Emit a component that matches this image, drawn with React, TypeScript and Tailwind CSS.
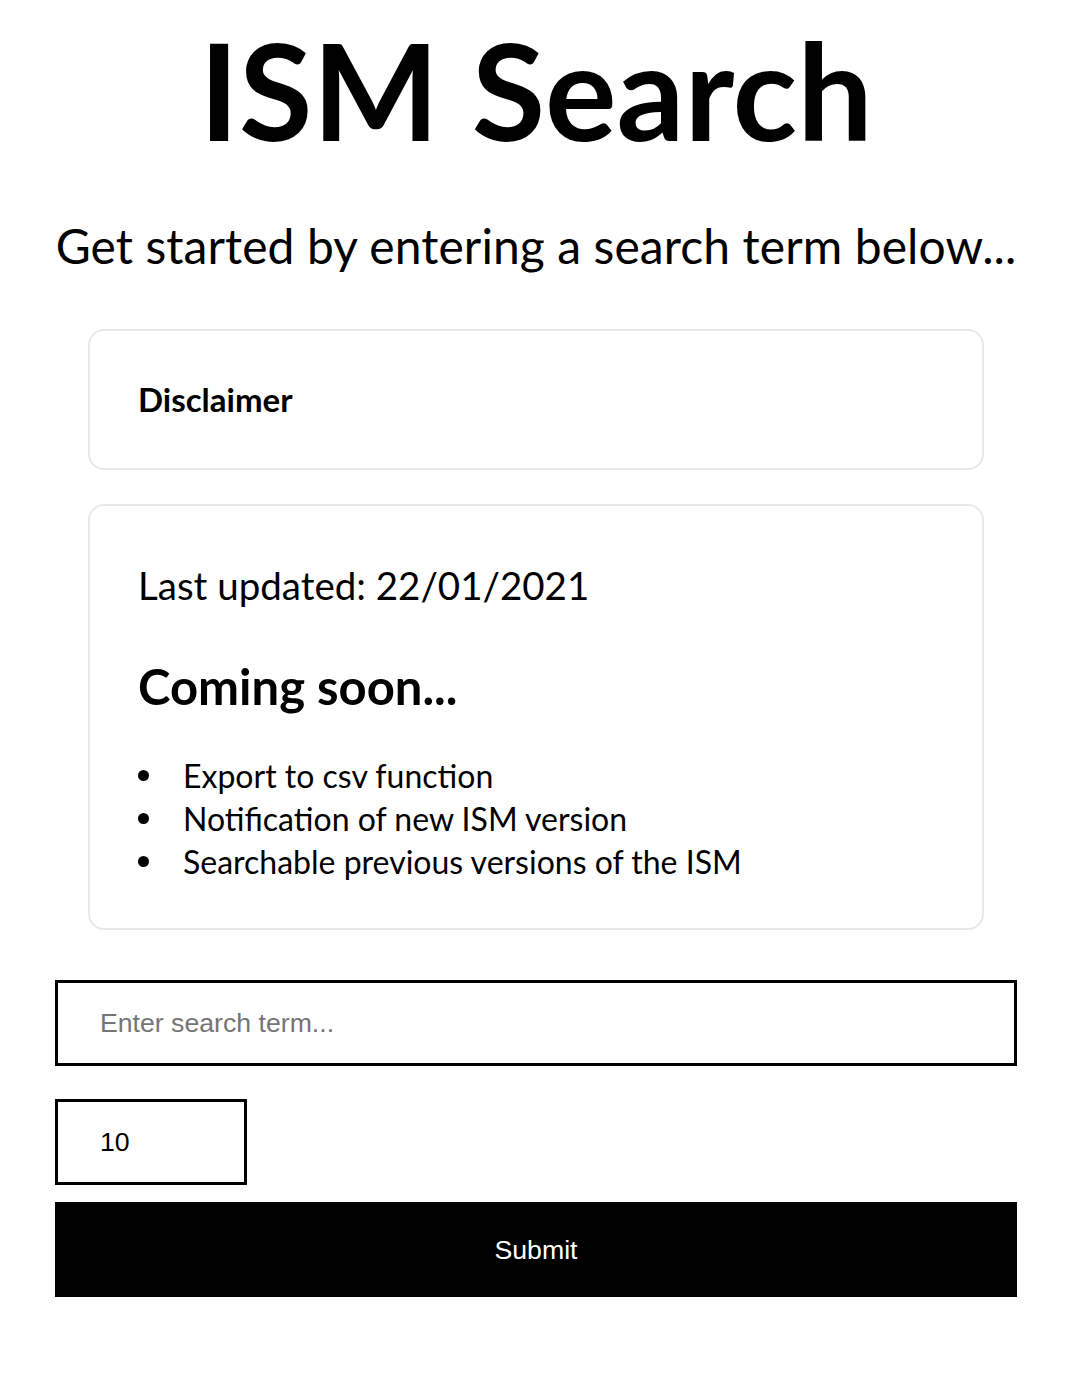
import React from 'react';

const features = [
  'Export to csv function',
  'Notification of new ISM version',
  'Searchable previous versions of the ISM',
];

export default function App() {
  return (
    <div className="min-h-screen bg-white text-black font-['Lato','Noto_Sans',sans-serif]">
      <div className="ml-[55px] w-[962px] pt-[20px]">
        <h1 className="text-center text-[134px] leading-[140px] font-bold">ISM Search</h1>
        <p className="mt-[56px] text-center text-[48px] leading-[60px] tracking-[0.08px] whitespace-nowrap">
          Get started by entering a search term below...
        </p>

        <div className="mx-[33px] mt-[53px] flex flex-col gap-[34px]">
          {/* Disclaimer */}
          <div className="rounded-2xl border-2 border-[#e8e8e8] px-[48px] h-[141px] flex items-center">
            <h3 className="text-[33px] font-bold">Disclaimer</h3>
          </div>

          {/* Updates */}
          <div className="rounded-2xl border-2 border-[#e8e8e8] px-[48px] pt-[55px] pb-[45px]">
            <p className="text-[38.5px] leading-[48px]">Last updated: 22/01/2021</p>
            <h2 className="mt-[49px] text-[49px] leading-[56px] font-bold">Coming soon...</h2>
            <ul className="mt-[40px] text-[32px] leading-[43px]">
              {features.map((f) => (
                <li key={f} className="flex items-center">
                  <span className="w-[45px] shrink-0">
                    <span className="block h-[11px] w-[11px] rounded-full bg-black" />
                  </span>
                  {f}
                </li>
              ))}
            </ul>
          </div>
        </div>

        <form className="mt-[50px] flex flex-col font-['Liberation_Sans',Arial,sans-serif]">
          <input
            type="text"
            placeholder="Enter search term..."
            className="h-[86px] w-full border-[3px] border-black px-[42px] text-[26.67px] placeholder:text-[#757575] outline-none"
          />
          <input
            type="number"
            defaultValue={10}
            className="mt-[33px] h-[86px] w-[192px] border-[3px] border-black px-[42px] text-[26.67px] outline-none"
          />
          <button
            type="button"
            className="mt-[17px] h-[95px] w-full bg-black text-white text-[26.67px]"
          >
            Submit
          </button>
        </form>
      </div>
    </div>
  );
}
